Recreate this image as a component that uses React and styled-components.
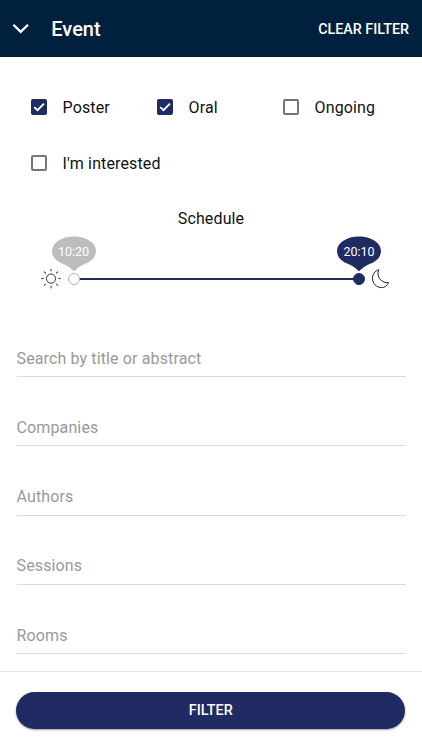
import React, { useState } from 'react'
import styled, { createGlobalStyle } from 'styled-components'

const GlobalStyle = createGlobalStyle`
  :root {
    --navy: #1f2b62;
    --header: #00203d;
    --grey: #bdbdbd;
    --placeholder: #999;
  }
  * {
    box-sizing: border-box;
  }
  body {
    margin: 0;
    background: #fff;
    color: #111;
    font-family: Roboto, "Liberation Sans", sans-serif;
  }
  button {
    font-family: inherit;
    border: none;
    cursor: pointer;
  }
`

const options = [
  { id: 'poster', label: 'Poster' },
  { id: 'oral', label: 'Oral' },
  { id: 'ongoing', label: 'Ongoing' },
  { id: 'interested', label: "I'm interested" },
]

const fields = ['Search by title or abstract', 'Companies', 'Authors', 'Sessions', 'Rooms']

const rays = [0, 45, 90, 135, 180, 225, 270, 315]

const Sun = () => (
  <svg width="22" height="22" viewBox="0 0 22 22" fill="none" stroke="#333" strokeWidth="1">
    <circle cx="11" cy="10.6" r="4.6" />
    {rays.map((angle) => (
      <path key={angle} d="M11 3.3V.8" transform={`rotate(${angle} 11 10.6)`} />
    ))}
  </svg>
)

const Moon = () => (
  <svg width="18" height="20" viewBox="0 0 18 20" fill="none" stroke="#222" strokeWidth="1">
    <path
      d="M7.6.7C3.9 2 1.5 5.4 1.5 9.4C1.5 14.6 5.6 18.6 10.6 18.6C13.7 18.6 16.3 16.7 17.5 13.6C11.2 14.4 4.8 8.3 7.6.7Z"
      strokeLinejoin="round"
    />
  </svg>
)

const Thumb = ({ value, position, active }) => (
  <Handle $active={active} style={{ left: `${position}%` }}>
    <Bubble $active={active}>
      <svg width="46" height="36" viewBox="0 0 46 36">
        <path d="M23 .5C35.3.5 45 6.7 45 15C45 21.4 39.8 26.2 32.5 28.4C29.4 29.6 26 32.4 23 35.3C20 32.4 16.6 29.6 13.5 28.4C6.2 26.2 1 21.4 1 15C1 6.7 10.7.5 23 .5Z" />
      </svg>
      <span>{value}</span>
    </Bubble>
  </Handle>
)

const App = () => {
  const [checked, setChecked] = useState(['poster', 'oral'])

  const toggle = (id) => {
    setChecked(checked.includes(id) ? checked.filter((item) => item !== id) : [...checked, id])
  }

  return (
    <>
      <GlobalStyle />
      <Page>
        <Header>
          <BackButton type="button" aria-label="Close filter">
            <svg width="18" height="12" viewBox="0 0 18 12" fill="none" stroke="#fff" strokeWidth="2.3">
              <path d="M1.4 1.7L8.7 8.9L16 1.7" />
            </svg>
          </BackButton>
          <Title>Event</Title>
          <ClearButton type="button">CLEAR FILTER</ClearButton>
        </Header>
        <Options>
          {options.map(({ id, label }) => {
            const isChecked = checked.includes(id)
            return (
              <Option key={id} type="button" role="checkbox" aria-checked={isChecked} onClick={() => toggle(id)}>
                <Box $checked={isChecked}>
                  {isChecked && (
                    <svg width="16" height="16" viewBox="0 0 16 16" fill="none" stroke="#fff" strokeWidth="1.9">
                      <path d="M3.2 8.1L6.5 11.2L13 4.6" />
                    </svg>
                  )}
                </Box>
                {label}
              </Option>
            )
          })}
        </Options>
        <Schedule>
          <h2>Schedule</h2>
          <Slider>
            <Sun />
            <Track>
              <Thumb value="10:20" position={0} />
              <Thumb value="20:10" position={100} active />
            </Track>
            <Moon />
          </Slider>
        </Schedule>
        <Fields>
          {fields.map((field) => (
            <Field key={field} placeholder={field} aria-label={field} />
          ))}
        </Fields>
        <Footer>
          <FilterButton type="button">FILTER</FilterButton>
        </Footer>
      </Page>
    </>
  )
}

const Page = styled.div`
  display: flex;
  flex-direction: column;
  height: 750px;
  overflow: hidden;
`

const Header = styled.header`
  display: flex;
  align-items: center;
  flex-shrink: 0;
  height: 57.3px;
  padding: 0 13px 0 12px;
  background: var(--header);
  color: #fff;
`

const BackButton = styled.button`
  display: flex;
  width: 39.3px;
  padding: 0;
  background: transparent;
`

const Title = styled.h1`
  flex: 1;
  margin: 0;
  font-size: 20px;
  font-weight: 500;
`

const ClearButton = styled.button`
  padding: 0;
  background: transparent;
  color: #fff;
  font-size: 14.3px;
  font-weight: 500;
`

const Options = styled.div`
  display: grid;
  grid-template-columns: repeat(3, 126px);
  grid-auto-rows: 56px;
  padding: 22px 0 0 31px;
`

const Option = styled.button`
  display: flex;
  align-items: center;
  gap: 15.6px;
  padding: 0;
  background: transparent;
  color: #111;
  font-size: 16px;
  letter-spacing: 0.13px;
  white-space: nowrap;
`

const Box = styled.span`
  flex-shrink: 0;
  width: 16px;
  height: 16px;
  border: ${({ $checked }) => ($checked ? 'none' : '2px solid #757575')};
  border-radius: 2px;
  background: ${({ $checked }) => ($checked ? 'var(--navy)' : '#fff')};
  svg {
    display: block;
  }
`

const Schedule = styled.section`
  padding-top: 18px;
  h2 {
    margin: 0;
    font-size: 16px;
    font-weight: 400;
    line-height: 20px;
    letter-spacing: 0.13px;
    text-align: center;
  }
`

const Slider = styled.div`
  display: flex;
  align-items: center;
  padding: 38.5px 33px 0 40px;
`

const Track = styled.div`
  position: relative;
  flex: 1;
  height: 2px;
  margin: 0 12px 0 11.5px;
  background: var(--navy);
`

const Handle = styled.div`
  position: absolute;
  top: -5px;
  width: 12px;
  height: 12px;
  margin-left: -6px;
  border: 1.5px solid ${({ $active }) => ($active ? 'var(--navy)' : '#b0b0b0')};
  border-radius: 50%;
  background: ${({ $active }) => ($active ? 'var(--navy)' : '#fff')};
`

const Bubble = styled.div`
  position: absolute;
  bottom: 12px;
  left: 50%;
  width: 46px;
  height: 36px;
  transform: translateX(-50%);
  color: #fff;
  font-size: 12.5px;
  line-height: 31px;
  text-align: center;
  svg {
    position: absolute;
    top: 0;
    left: 0;
    fill: ${({ $active }) => ($active ? 'var(--navy)' : 'var(--grey)')};
  }
  span {
    position: relative;
  }
`

const Fields = styled.div`
  display: flex;
  flex-direction: column;
  gap: 32.2px;
  padding: 50.5px 16.5px 0;
`

const Field = styled.input`
  width: 100%;
  height: 37px;
  padding: 0;
  border: none;
  border-bottom: 1px solid #dcdcdc;
  outline: none;
  background: transparent;
  font-family: inherit;
  font-size: 16px;
  letter-spacing: 0.13px;
  &::placeholder {
    color: var(--placeholder);
    opacity: 1;
  }
`

const Footer = styled.footer`
  flex-shrink: 0;
  height: 79px;
  margin-top: auto;
  padding: 20.3px 16.8px 0 16.3px;
  border-top: 1.5px solid #e6e6e6;
`

const FilterButton = styled.button`
  display: block;
  width: 100%;
  height: 36.5px;
  padding: 0 0 1px;
  border-radius: 19px;
  background: var(--navy);
  color: #fff;
  font-size: 14.4px;
  font-weight: 500;
  box-shadow: 0 1px 2px rgba(0, 0, 0, 0.4);
`

export default App
